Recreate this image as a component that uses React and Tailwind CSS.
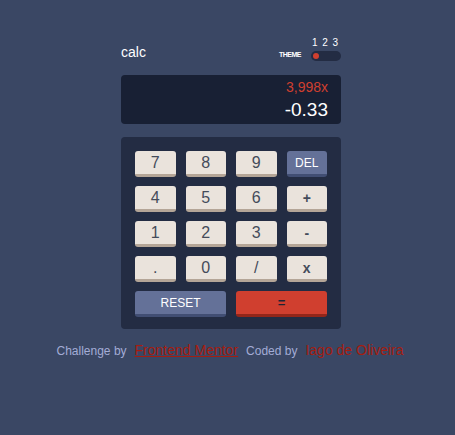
import React from 'react';

const keys = [
  { label: '7' }, { label: '8' }, { label: '9' }, { label: 'DEL', kind: 'blue' },
  { label: '4' }, { label: '5' }, { label: '6' }, { label: '+', small: true },
  { label: '1' }, { label: '2' }, { label: '3' }, { label: '-', small: true },
  { label: '.' }, { label: '0' }, { label: '/' }, { label: 'x', small: true },
];

const Key = ({ label, kind, small, wide }) => {
  const base = 'h-[26px] rounded-[3px] border-b-[3px] flex items-center justify-center';
  let look = 'bg-[#eae3dc] border-[#b4a597] text-[#444b5a] text-[16px]';
  if (kind === 'blue') look = 'bg-[#647198] border-[#414e73] text-white text-[12px]';
  if (kind === 'red') look = 'bg-[#d03f2f] border-[#93261a] text-[#1f2433] text-[13px] font-bold';
  if (small) look = 'bg-[#eae3dc] border-[#b4a597] text-[#444b5a] text-[14px] font-bold';
  return (
    <button className={`${base} ${look} ${wide ? 'col-span-2' : ''} leading-none`}>
      {label}
    </button>
  );
};

export default function App() {
  return (
    <div
      className="min-h-[435px] w-full bg-[#3a4764] flex flex-col items-center pt-[38px] pl-[7px]"
      style={{ fontFamily: '"Liberation Sans", Arial, sans-serif' }}
    >
      <div className="w-[220px]">
        {/* header */}
        <div className="flex items-end justify-between h-[23px]">
          <span className="text-white text-[14px] leading-none mb-[2px]">calc</span>
          <div className="flex items-end gap-[10px]">
            <span className="text-white text-[7px] font-bold tracking-[-0.5px] leading-none mb-[3px]">THEME</span>
            <div className="flex flex-col items-center">
              <div className="flex w-[30px] justify-between text-white text-[10px] leading-none mb-[3px] pl-[1px] pr-[3px]">
                <span>1</span><span>2</span><span>3</span>
              </div>
              <div className="w-[30px] h-[10px] rounded-full bg-[#232c43] flex items-center px-[2px]">
                <div className="w-[6px] h-[6px] rounded-full bg-[#d03f2f]" />
              </div>
            </div>
          </div>
        </div>

        {/* screen */}
        <div className="mt-[14px] h-[49px] rounded-[4px] bg-[#182034] flex flex-col items-end justify-center pr-[13px]">
          <span className="text-[#d03f2f] text-[14px] leading-none">3,998x</span>
          <span className="text-white text-[19px] leading-none mt-[6px]">-0.33</span>
        </div>

        {/* keypad */}
        <div className="mt-[13px] rounded-[4px] bg-[#232c43] pl-[14px] pr-[14px] pt-[14px] pb-[12px]">
          <div className="grid grid-cols-4 gap-x-[10px] gap-y-[9px]">
            {keys.map(k => <Key key={k.label} {...k} />)}
            <Key label="RESET" kind="blue" wide />
            <Key label="=" kind="red" wide />
          </div>
        </div>
      </div>

      {/* footer */}
      <div className="mt-[11px] flex items-center gap-[8px] text-[12px] -ml-[2px]">
        <span className="text-[#a3acd6]">Challenge by</span>
        <a className="text-[#a51d10] text-[14px] underline">Frontend Mentor</a>
        <span className="text-[#a3acd6]">Coded by</span>
        <a className="text-[#a51d10] text-[14px]">Iago de Oliveira</a>
      </div>
    </div>
  );
}
